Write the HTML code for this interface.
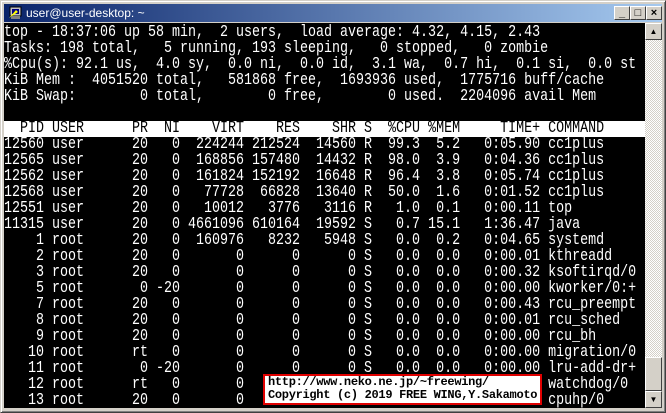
<!DOCTYPE html>
<html><head><meta charset="utf-8"><style>
*{margin:0;padding:0;box-sizing:border-box}
body{width:666px;height:413px;background:#d4d0c8;position:relative;overflow:hidden;font-family:"Liberation Sans",sans-serif}
.frame{position:absolute;left:0;top:0;width:666px;height:413px;border:1px solid;border-color:#d4d0c8 #404040 #404040 #d4d0c8;box-shadow:inset 1px 1px 0 #fff,inset -1px -1px 0 #808080}
.title{position:absolute;left:4px;top:4px;width:658px;height:18px;background:linear-gradient(90deg,#0a246a,#a6caf0);color:#fff;font-size:12px;line-height:18px;padding-left:22px}
.ico{position:absolute;left:4px;top:1px;width:15px;height:15px}
.btn{position:absolute;top:2px;width:16px;height:14px;background:#d4d0c8;border:1px solid;border-color:#fff #404040 #404040 #fff;color:#000;font-size:11px;line-height:12px;text-align:center;font-weight:bold}
.term{position:absolute;left:4px;top:23px;width:641px;height:385px;background:#000;overflow:hidden}
pre{font-family:"Liberation Mono",monospace;font-size:17px;line-height:16px;color:#fff;position:absolute;left:0;top:2px;transform:scaleX(0.7843);transform-origin:0 0}
.hd{background:#fff;color:#000;display:inline-block;width:818px}
.sb{position:absolute;left:645px;top:23px;width:17px;height:385px;background:repeating-conic-gradient(#fff 0 25%,#d4d0c8 0 50%) 0 0/2px 2px}
.sbb{position:absolute;left:0;width:17px;height:17px;background:#d4d0c8;border:1px solid;border-color:#fff #404040 #404040 #fff;font-size:8px;text-align:center;line-height:15px;color:#000}
.note{position:absolute;left:263px;top:374px;width:279px;height:31px;background:#fff;border:2px solid #e00000;font-family:"Liberation Mono",monospace;font-weight:bold;font-size:12px;line-height:13px;color:#000;padding-left:3px;letter-spacing:-0.3px}
</style></head><body>
<div class="frame"></div>
<div class="title"><svg class="ico" viewBox="0 0 15 15"><rect x="2" y="2" width="11" height="9" fill="#c0c0c0" stroke="#000"/><rect x="4" y="4" width="7" height="5" fill="#000080"/><path d="M1 13 L8 5 L10 7 Z" fill="#ff0"/><rect x="3" y="11" width="9" height="3" fill="#808080"/></svg>user@user-desktop: ~
<div class="btn" style="left:610px">_</div><div class="btn" style="left:626px">□</div><div class="btn" style="left:642px">×</div></div>
<div class="term"><pre>top - 18:37:06 up 58 min,  2 users,  load average: 4.32, 4.15, 2.43
Tasks: 198 total,   5 running, 193 sleeping,   0 stopped,   0 zombie
%Cpu(s): 92.1 us,  4.0 sy,  0.0 ni,  0.0 id,  3.1 wa,  0.7 hi,  0.1 si,  0.0 st
KiB Mem :  4051520 total,   581868 free,  1693936 used,  1775716 buff/cache
KiB Swap:        0 total,        0 free,        0 used.  2204096 avail Mem

<span class="hd">  PID USER      PR  NI    VIRT    RES    SHR S  %CPU %MEM     TIME+ COMMAND</span>
12560 user      20   0  224244 212524  14560 R  99.3  5.2   0:05.90 cc1plus
12565 user      20   0  168856 157480  14432 R  98.0  3.9   0:04.36 cc1plus
12562 user      20   0  161824 152192  16648 R  96.4  3.8   0:05.74 cc1plus
12568 user      20   0   77728  66828  13640 R  50.0  1.6   0:01.52 cc1plus
12551 user      20   0   10012   3776   3116 R   1.0  0.1   0:00.11 top
11315 user      20   0 4661096 610164  19592 S   0.7 15.1   1:36.47 java
    1 root      20   0  160976   8232   5948 S   0.0  0.2   0:04.65 systemd
    2 root      20   0       0      0      0 S   0.0  0.0   0:00.01 kthreadd
    3 root      20   0       0      0      0 S   0.0  0.0   0:00.32 ksoftirqd/0
    5 root       0 -20       0      0      0 S   0.0  0.0   0:00.00 kworker/0:+
    7 root      20   0       0      0      0 S   0.0  0.0   0:00.43 rcu_preempt
    8 root      20   0       0      0      0 S   0.0  0.0   0:00.01 rcu_sched
    9 root      20   0       0      0      0 S   0.0  0.0   0:00.00 rcu_bh
   10 root      rt   0       0      0      0 S   0.0  0.0   0:00.00 migration/0
   11 root       0 -20       0      0      0 S   0.0  0.0   0:00.00 lru-add-dr+
   12 root      rt   0       0      0      0 S   0.0  0.0   0:00.00 watchdog/0
   13 root      20   0       0      0      0 S   0.0  0.0   0:00.00 cpuhp/0</pre></div>
<div class="sb"><div class="sbb" style="top:0">▲</div><div class="sbb" style="top:334px;height:34px"></div><div class="sbb" style="top:368px">▼</div></div>
<div class="note">http://www.neko.ne.jp/~freewing/<br>Copyright (c) 2019 FREE WING,Y.Sakamoto</div>
</body></html>
